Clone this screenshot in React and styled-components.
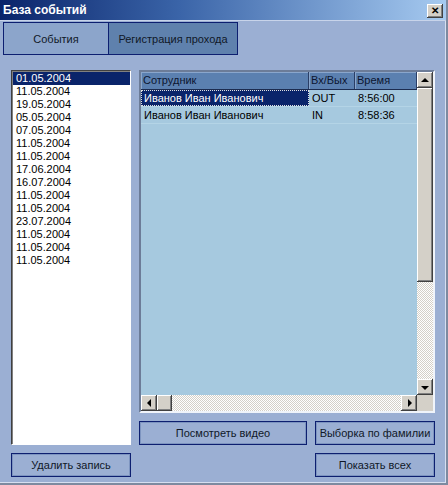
import styled, { createGlobalStyle } from 'styled-components'

const GlobalStyle = createGlobalStyle`
  html, body {
    margin: 0;
    padding: 0;
    background: #9bafd3;
  }
  body {
    font-family: "Liberation Sans", Arial, sans-serif;
    font-size: 11px;
    color: #000;
  }
`

const dates = [
  '01.05.2004', '11.05.2004', '19.05.2004', '05.05.2004', '07.05.2004',
  '11.05.2004', '11.05.2004', '17.06.2004', '16.07.2004', '11.05.2004',
  '11.05.2004', '23.07.2004', '11.05.2004', '11.05.2004', '11.05.2004',
]

const passes = [
  { name: 'Иванов Иван Иванович', dir: 'OUT', time: '8:56:00' },
  { name: 'Иванов Иван Иванович', dir: 'IN', time: '8:58:36' },
]

const App = () => {
  return (
    <Window>
      <GlobalStyle />
      <TitleBar>
        <span>База событий</span>
        <CloseButton>✕</CloseButton>
      </TitleBar>

      <TabStrip>
        <Tab width={104}>События</Tab>
        <Tab width={128} active>Регистрация прохода</Tab>
      </TabStrip>

      <Body>
        <DateList>
          {dates.map((d, i) => (
            <DateItem key={i} selected={i === 0}>{d}</DateItem>
          ))}
        </DateList>

        <Grid>
          <GridMain>
            <GridTable>
              <HeaderRow>
                <HeadCell width={168}>Сотрудник</HeadCell>
                <HeadCell width={46}>Вх/Вых</HeadCell>
                <HeadCell width={62}>Время</HeadCell>
              </HeaderRow>
              {passes.map((p, i) => (
                <DataRow key={i}>
                  <Cell width={168} selected={i === 0}>{p.name}</Cell>
                  <Cell width={46}>{p.dir}</Cell>
                  <Cell width={62}>{p.time}</Cell>
                </DataRow>
              ))}
            </GridTable>
            <VScroll>
              <ArrowButton><Arrow dir="up" /></ArrowButton>
              <Thumb height={194} />
              <Track />
              <ArrowButton><Arrow dir="down" /></ArrowButton>
            </VScroll>
          </GridMain>
          <HScrollRow>
            <HScroll>
              <ArrowButton><Arrow dir="left" /></ArrowButton>
              <Thumb width={15} />
              <Track />
              <ArrowButton><Arrow dir="right" /></ArrowButton>
            </HScroll>
            <Corner />
          </HScrollRow>
        </Grid>

        <Button col="2" row="2">Посмотреть видео</Button>
        <Button col="3" row="2">Выборка по фамилии</Button>
        <Button col="1" row="3">Удалить запись</Button>
        <Button col="3" row="3">Показать всех</Button>
      </Body>
    </Window>
  )
}

const Window = styled.div`
  width: 446px;
  height: 483px;
  display: flex;
  flex-direction: column;
  background: #9bafd3;
  border-right: 2px solid #7d8aa0;
  border-bottom: 2px solid #7d8aa0;
  box-shadow: inset -1px -1px 0 #d6dff0;
`

const TitleBar = styled.div`
  height: 20px;
  display: flex;
  align-items: center;
  justify-content: space-between;
  padding: 0 3px 0 3px;
  background: linear-gradient(to right, #0a246a 0%, #3a64a8 40%, #a6caf0 100%);
  border-bottom: 1px solid #c8d4ea;
  color: #fff;
  font-family: "Liberation Sans", Arial, sans-serif;
  font-weight: bold;
  font-size: 12px;
`

const CloseButton = styled.div`
  width: 16px;
  height: 14px;
  margin-top: 1px;
  display: flex;
  align-items: center;
  justify-content: center;
  background: #d4d0c8;
  color: #000;
  font-size: 10px;
  font-weight: bold;
  box-shadow: inset -1px -1px 0 #404040, inset 1px 1px 0 #fff,
    inset -2px -2px 0 #808080;
`

const TabStrip = styled.div`
  display: flex;
  padding: 1px 0 0 3px;
`

const Tab = styled.div`
  width: ${(p) => p.width}px;
  height: 31px;
  display: flex;
  align-items: center;
  justify-content: center;
  background: ${(p) => (p.active ? '#5f81ad' : '#8ca5cb')};
  border: 1px solid #0d1f70;
  border-left-width: ${(p) => (p.active ? 0 : 1)}px;
  color: #101828;
`

const Body = styled.div`
  flex: 1;
  display: grid;
  grid-template-columns: 120px 168px 120px;
  grid-template-rows: 343px 24px 24px;
  column-gap: 8px;
  row-gap: 8px;
  padding: 15px 0 0 11px;
`

const DateList = styled.div`
  grid-column: 1;
  grid-row: 1 / span 2;
  background: #fff;
  border: 1px solid;
  border-color: #404040 #fff #fff #404040;
  box-shadow: inset 1px 1px 0 #808080;
  padding: 1px 0 0 1px;
`

const DateItem = styled.div`
  height: 13px;
  line-height: 13px;
  padding-left: 3px;
  background: ${(p) => (p.selected ? '#0a246a' : 'transparent')};
  color: ${(p) => (p.selected ? '#fff' : '#000')};
`

const Grid = styled.div`
  grid-column: 2 / span 2;
  grid-row: 1;
  display: flex;
  flex-direction: column;
  border: 2px solid;
  border-color: #6c7c98 #f0f4fa #f0f4fa #6c7c98;
  background: #a6c9df;
`

const GridMain = styled.div`
  flex: 1;
  display: flex;
  min-height: 0;
`

const GridTable = styled.div`
  flex: 1;
  display: flex;
  flex-direction: column;
`

const HeaderRow = styled.div`
  display: flex;
  height: 17px;
  background: #5b80b0;
  border-bottom: 1px solid #1c2c50;
`

const HeadCell = styled.div`
  width: ${(p) => p.width}px;
  box-sizing: border-box;
  padding-left: 2px;
  line-height: 17px;
  color: #0c1630;
  border-right: 1px solid #2a3e66;
  box-shadow: inset 1px 1px 0 #8aa6cc;
`

const DataRow = styled.div`
  display: flex;
  height: 16px;
  border-bottom: 1px solid #b4d4e6;
`

const Cell = styled.div`
  width: ${(p) => p.width}px;
  box-sizing: border-box;
  padding-left: 2px;
  line-height: 14px;
  background: ${(p) => (p.selected ? '#0a246a' : 'transparent')};
  color: ${(p) => (p.selected ? '#fff' : '#000')};
  border: 1px ${(p) => (p.selected ? 'dotted #e0e0e0' : 'solid transparent')};
`

const VScroll = styled.div`
  width: 16px;
  display: flex;
  flex-direction: column;
`

const HScrollRow = styled.div`
  display: flex;
  height: 16px;
`

const HScroll = styled.div`
  flex: 1;
  display: flex;
`

const Corner = styled.div`
  width: 16px;
  background: #d4d0c8;
`

const ArrowButton = styled.div`
  width: 16px;
  height: 16px;
  flex: none;
  display: flex;
  align-items: center;
  justify-content: center;
  background: #d4d0c8;
  box-shadow: inset -1px -1px 0 #404040, inset 1px 1px 0 #fff,
    inset -2px -2px 0 #808080;
`

const Thumb = styled.div`
  flex: none;
  width: ${(p) => (p.width ? `${p.width}px` : '16px')};
  height: ${(p) => (p.height ? `${p.height}px` : '16px')};
  background: #d4d0c8;
  box-shadow: inset -1px -1px 0 #404040, inset 1px 1px 0 #fff,
    inset -2px -2px 0 #808080;
`

const Track = styled.div`
  flex: 1;
  background: repeating-conic-gradient(#d4d0c8 0 25%, #ffffff 0 50%) 0 0 / 2px 2px;
`

const Arrow = styled.div`
  width: 0;
  height: 0;
  border: 4px solid transparent;
  ${(p) =>
    p.dir === 'up'
      ? 'border-bottom-color: #000; border-top-width: 0; margin-top: -1px;'
      : p.dir === 'down'
      ? 'border-top-color: #000; border-bottom-width: 0; margin-top: 1px;'
      : p.dir === 'left'
      ? 'border-right-color: #000; border-left-width: 0; margin-left: -1px;'
      : 'border-left-color: #000; border-right-width: 0; margin-left: 1px;'}
`

const Button = styled.div`
  grid-column: ${(p) => p.col};
  grid-row: ${(p) => p.row};
  display: flex;
  align-items: center;
  justify-content: center;
  border: 1px solid #0d1f70;
  box-shadow: inset 0 0 0 1px #7d94c0;
  background: #9bafd3;
  color: #101828;
  white-space: nowrap;
`

export default App
